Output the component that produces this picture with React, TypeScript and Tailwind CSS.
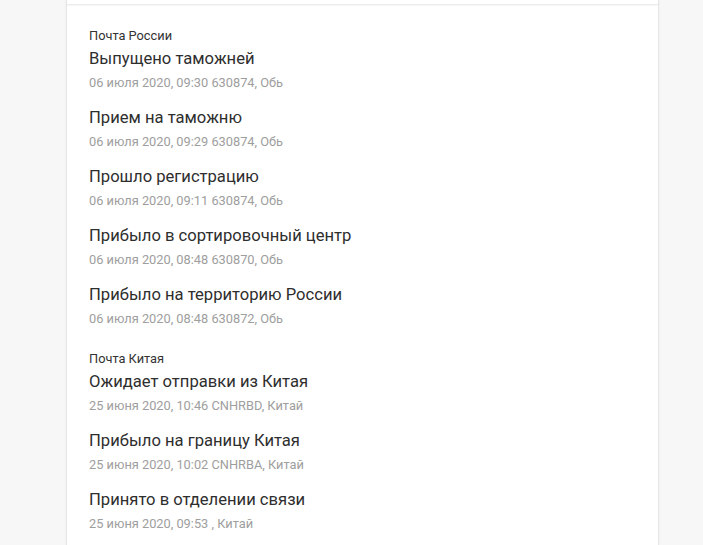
import React from 'react'

type Event = { title: string; meta: string }
type Group = { carrier: string; events: Event[] }

const groups: Group[] = [
  {
    carrier: 'Почта России',
    events: [
      { title: 'Выпущено таможней', meta: '06 июля 2020, 09:30 630874, Обь' },
      { title: 'Прием на таможню', meta: '06 июля 2020, 09:29 630874, Обь' },
      { title: 'Прошло регистрацию', meta: '06 июля 2020, 09:11 630874, Обь' },
      { title: 'Прибыло в сортировочный центр', meta: '06 июля 2020, 08:48 630870, Обь' },
      { title: 'Прибыло на территорию России', meta: '06 июля 2020, 08:48 630872, Обь' }
    ]
  },
  {
    carrier: 'Почта Китая',
    events: [
      { title: 'Ожидает отправки из Китая', meta: '25 июня 2020, 10:46 CNHRBD, Китай' },
      { title: 'Прибыло на границу Китая', meta: '25 июня 2020, 10:02 CNHRBA, Китай' },
      { title: 'Принято в отделении связи', meta: '25 июня 2020, 09:53 , Китай' }
    ]
  }
]

export default function App(): React.JSX.Element {
  return (
    <div
      className="h-[545px] overflow-hidden bg-[#f7f7f7] pl-[66px]"
      style={{ fontFamily: 'Roboto, "Noto Sans", sans-serif' }}
    >
      <div className="w-[593px] h-full bg-white border-x border-[#e6e6e6] shadow-[0_0_2px_rgba(0,0,0,0.06)]">
        <div className="h-[5px] border-b border-[#ebebeb] shadow-[0_1px_2px_rgba(0,0,0,0.04)]" />
        <div className="px-[22px] pt-[20px]">
          {groups.map((g) => (
            <div key={g.carrier} className="pb-[7px]">
              <div className="text-[12.8px] leading-[21px] text-[#333]">{g.carrier}</div>
              {g.events.map((e) => (
                <div key={e.title} className="mb-[11px]">
                  <div className="text-[16.6px] leading-[26px] text-[#2e2e2e]">{e.title}</div>
                  <div className="text-[12.8px] leading-[22px] text-[#9e9e9e]">{e.meta}</div>
                </div>
              ))}
            </div>
          ))}
        </div>
      </div>
    </div>
  )
}
